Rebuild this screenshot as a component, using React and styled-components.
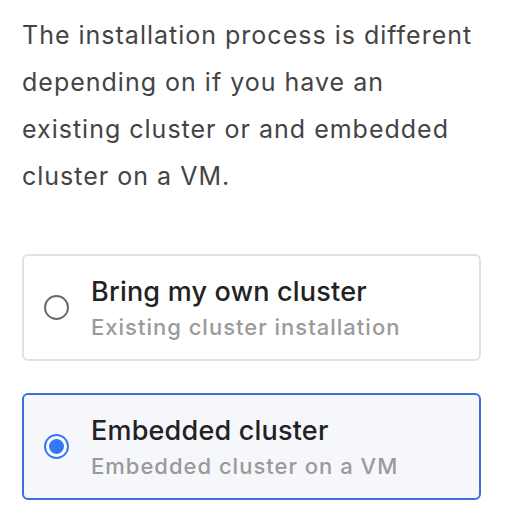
import React, { useState } from "react";
import styled, { createGlobalStyle } from "styled-components";

const Global = createGlobalStyle`
  html, body { margin: 0; padding: 0; background: #ffffff; }
  body { font-family: Inter, "Noto Sans", "Liberation Sans", sans-serif; -webkit-font-smoothing: antialiased; }
`;

const Page = styled.div`
  padding: 12px 25px 0 22px;
  display: flex;
  flex-direction: column;
`;

const Intro = styled.p`
  margin: 0;
  font-size: 25px;
  letter-spacing: 1px;
  line-height: 47px;
  color: #444444;
`;

const Options = styled.div`
  margin-top: 54px;
  display: flex;
  flex-direction: column;
  gap: 32px;
`;

const Card = styled.label`
  box-sizing: border-box;
  height: 107px;
  display: flex;
  align-items: center;
  gap: 22px;
  padding: 0 20px;
  border-radius: 6px;
  border: ${(p) => (p.$selected ? "2px solid #3a6fe0" : "2px solid #e2e2e2")};
  background: ${(p) => (p.$selected ? "#f6f7fb" : "#ffffff")};
  cursor: pointer;
`;

const Radio = styled.span`
  box-sizing: border-box;
  flex: none;
  width: 25px;
  height: 25px;
  border-radius: 50%;
  border: 2px solid ${(p) => (p.$selected ? "#3478f6" : "#6b6b6b")};
  background: #ffffff;
  display: flex;
  align-items: center;
  justify-content: center;
  &::after {
    content: "";
    width: 15px;
    height: 15px;
    border-radius: 50%;
    background: #3478f6;
    display: ${(p) => (p.$selected ? "block" : "none")};
  }
`;

const Texts = styled.div`
  display: flex;
  flex-direction: column;
  gap: 4px;
`;

const Title = styled.div`
  font-size: 27px;
  letter-spacing: 0.2px;
  line-height: 34px;
  font-weight: 500;
  color: #222222;
`;

const Sub = styled.div`
  font-size: 22px;
  letter-spacing: 1px;
  line-height: 28px;
  font-weight: 500;
  color: #9a9a9a;
`;

const options = [
  { id: "own", title: "Bring my own cluster", sub: "Existing cluster installation" },
  { id: "embedded", title: "Embedded cluster", sub: "Embedded cluster on a VM" },
];

export default function App() {
  const [value, setValue] = useState("embedded");
  return (
    <>
      <Global />
      <Page>
        <Intro>
          The installation process is different depending on if you have an existing cluster or and embedded cluster on a VM.
        </Intro>
        <Options>
          {options.map((o) => (
            <Card key={o.id} $selected={value === o.id} onClick={() => setValue(o.id)}>
              <Radio $selected={value === o.id} />
              <Texts>
                <Title>{o.title}</Title>
                <Sub>{o.sub}</Sub>
              </Texts>
            </Card>
          ))}
        </Options>
      </Page>
    </>
  );
}
